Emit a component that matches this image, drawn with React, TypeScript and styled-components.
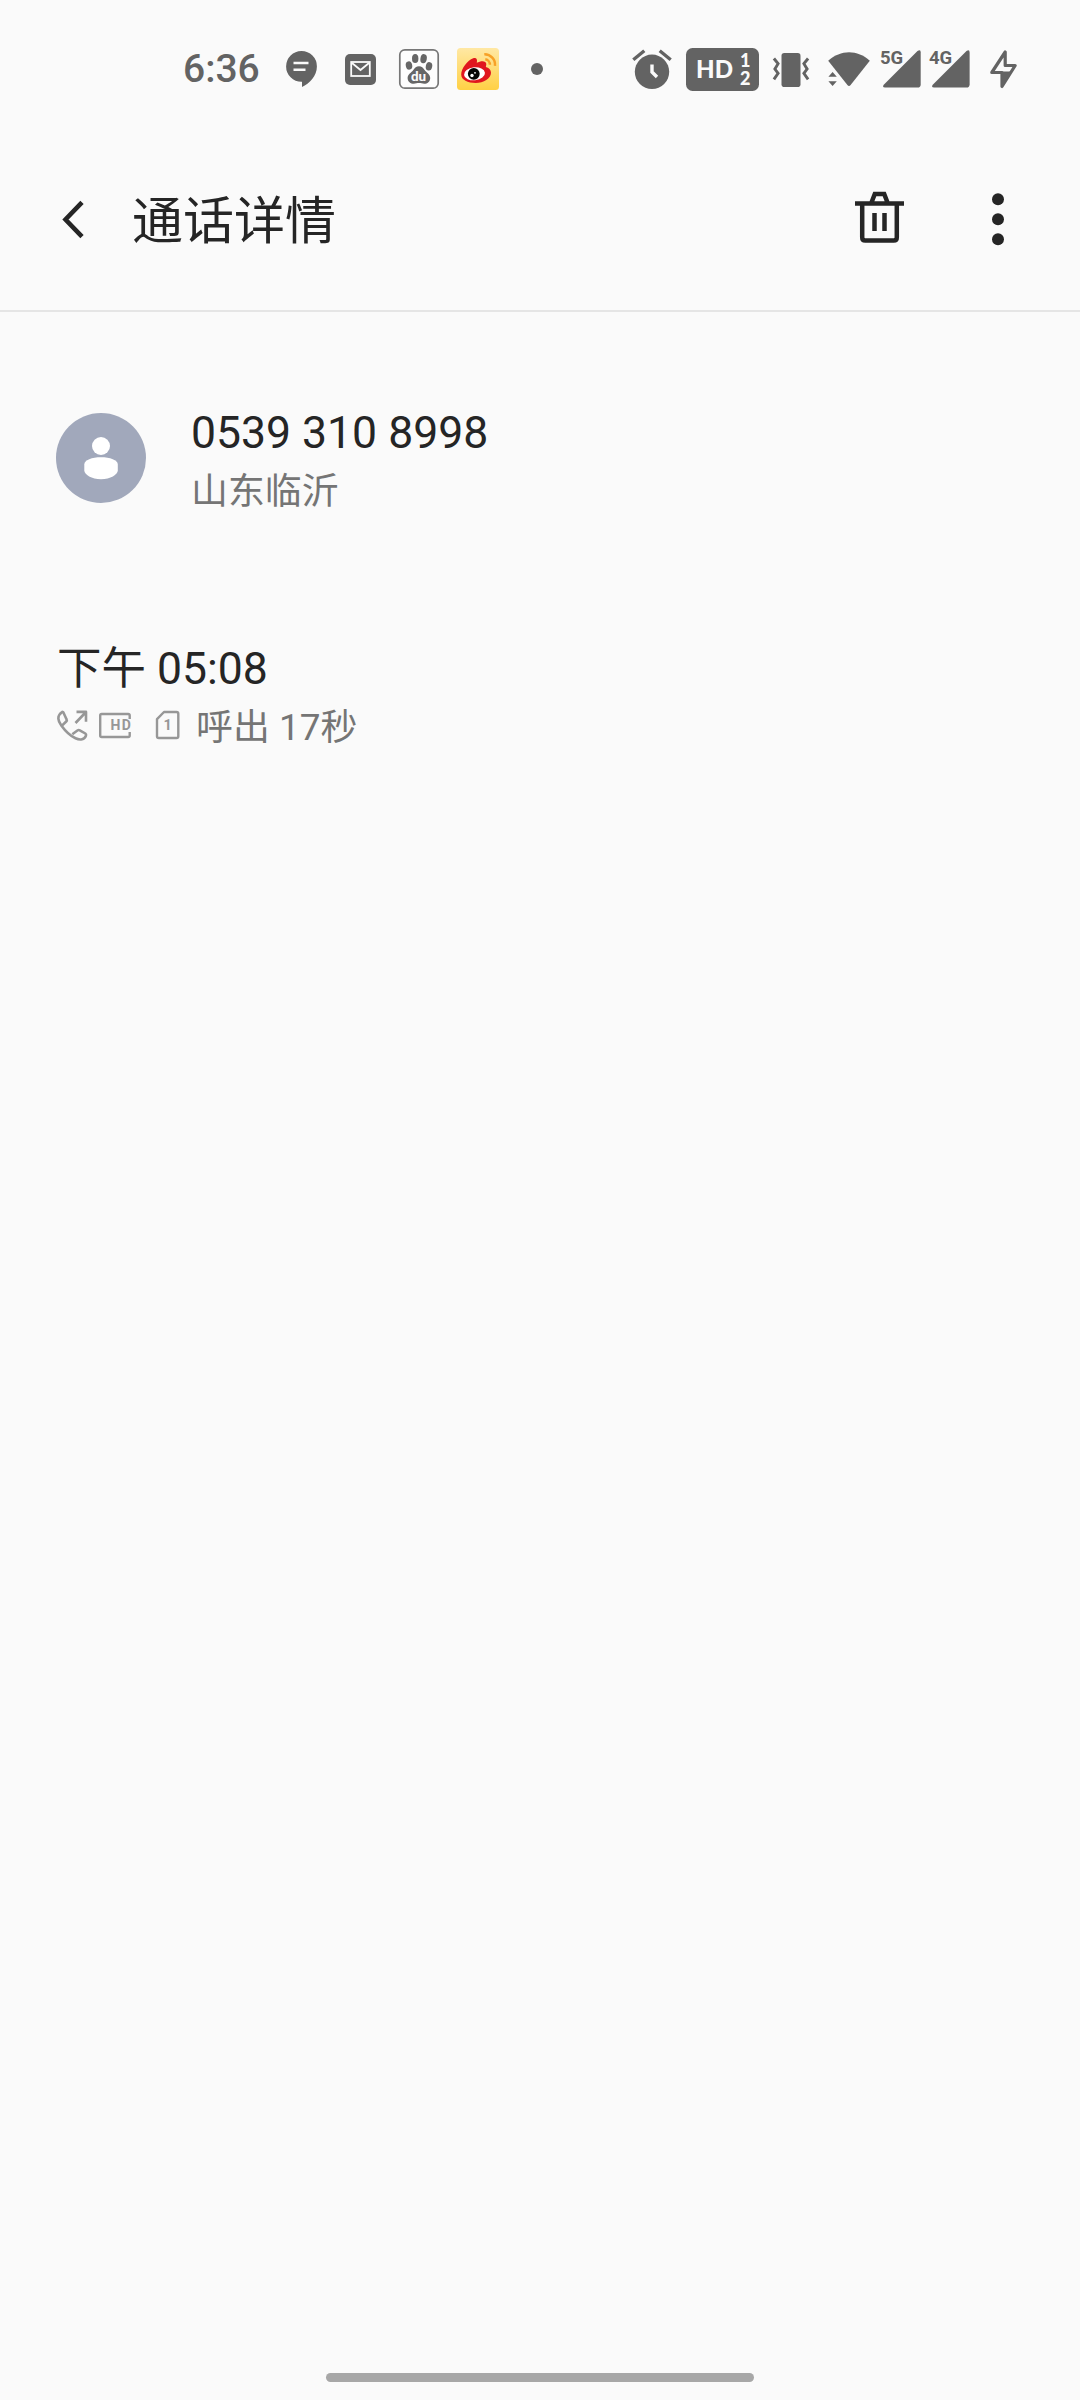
import React from 'react';
import styled, { createGlobalStyle } from 'styled-components';

const ink = '#252525';
const grey = '#636363';
const muted = '#757575';
const soft = '#979797';

const GlobalStyle = createGlobalStyle`
  body {
    margin: 0;
    background: #fafafa;
  }
`;

const Screen = styled.div`
  display: flex;
  flex-direction: column;
  box-sizing: border-box;
  width: 1080px;
  height: 2400px;
  background: #fafafa;
  color: ${ink};
  font-family: Roboto, 'Noto Sans CJK SC', sans-serif;
`;

const StatusBar = styled.header`
  display: flex;
  align-items: center;
  justify-content: space-between;
  height: 138px;
  padding: 0 63px 0 183px;
`;

const StatusGroup = styled.div`
  display: flex;
  align-items: center;
`;

const Clock = styled.time`
  width: 75px;
  color: ${grey};
  font-size: 39px;
  font-weight: 500;
  line-height: 46px;
  white-space: nowrap;
`;

const Icon = styled.svg<{ $gap?: number }>`
  display: block;
  flex: none;
  overflow: visible;
  margin-left: ${({ $gap = 0 }) => $gap}px;
`;

const TitleBar = styled.div`
  display: flex;
  align-items: center;
  box-sizing: border-box;
  height: 174px;
  padding: 0 76px 10px 62px;
  border-bottom: 2px solid #e5e5e5;
`;

const IconButton = styled.button`
  display: flex;
  padding: 0;
  border: 0;
  background: none;
  color: ${ink};
`;

const Title = styled.h1`
  flex: 1;
  margin: 0 0 0 48px;
  padding-top: 6px;
  font-size: 51px;
  font-weight: 400;
  line-height: 64px;
`;

const Actions = styled.div`
  display: flex;
  align-items: center;
  gap: 88px;
`;

const Content = styled.main`
  display: flex;
  flex: 1;
  flex-direction: column;
  padding: 91px 56px 0;
`;

const Contact = styled.section`
  display: flex;
  align-items: center;
  gap: 45px;
  height: 110px;
`;

const ContactText = styled.div`
  display: flex;
  flex-direction: column;
  padding-top: 8px;
`;

const Primary = styled.div`
  font-size: 44.5px;
  line-height: 58px;
  white-space: nowrap;
`;

const Secondary = styled.div`
  color: ${muted};
  font-size: 36.9px;
  font-weight: 400;
  line-height: 60px;
  height: 58px;
  white-space: nowrap;
`;

const Call = styled.section`
  display: flex;
  flex-direction: column;
  margin-top: 127px;
  padding-left: 1px;
`;

const CallMeta = styled.div`
  display: flex;
  align-items: center;
  height: 54px;
`;

const CallText = styled(Secondary)`
  margin-left: 16px;
  padding-top: 4px;
`;

const NavArea = styled.footer`
  display: flex;
  justify-content: center;
  align-items: flex-start;
  height: 27px;
`;

const NavPill = styled.div`
  width: 428px;
  height: 9px;
  border-radius: 5px;
  background: #a7a7a7;
`;

type IconProps = {
  box: [number, number, number, number];
  gap?: number;
  children: React.ReactNode;
};

const Glyph = ({ box, gap, children }: IconProps) => (
  <Icon $gap={gap} width={box[2]} height={box[3]} viewBox={box.join(' ')} fill="none">
    {children}
  </Icon>
);

const font = 'Roboto, sans-serif';

const Notifications = () => (
  <>
    <Glyph box={[286, 49, 31, 40]} gap={28}>
      <path d="M301.500 51a15.400 15.400 0 0 1 15.400 15.600c0 9.400-7.400 17.400-14.900 20.400v-5.200h-.5A15.400 15.400 0 0 1 301.500 51Z" fill={grey} />
      <path d="M293.500 63h15M293.500 69.800h12" stroke="#fafafa" strokeWidth="2.600" />
    </Glyph>
    <Glyph box={[345, 49, 31, 40]} gap={28}>
      <rect x="345" y="54" width="31" height="31" rx="5" fill={grey} />
      <rect x="351.200" y="62" width="18.600" height="14" stroke="#fafafa" strokeWidth="1.800" />
      <path d="M352 63l8.500 7 8.500-7" stroke="#fafafa" strokeWidth="1.800" />
    </Glyph>
    <Glyph box={[399, 49, 40, 40]} gap={23}>
      <rect x="399.800" y="49.800" width="38.400" height="38.400" rx="5" fill="#fdfdfd" stroke="#777" strokeWidth="1.700" />
      <g fill="#666">
        <ellipse cx="415.200" cy="58.500" rx="3.200" ry="4.600" />
        <ellipse cx="423.600" cy="58.700" rx="3.200" ry="4.600" transform="rotate(10 423.600 58.700)" />
        <ellipse cx="409" cy="65.500" rx="3.200" ry="4.200" transform="rotate(-12 409 65.500)" />
        <ellipse cx="429" cy="66.300" rx="3.200" ry="4.200" transform="rotate(12 429 66.300)" />
        <path d="M419 66.300c2.600 0 4.200 1.500 5.600 3.600 1.800 2.500 5.600 4.200 5.600 8 0 3.800-2.900 5.900-5.900 5.900-2 0-3.400-.7-5.300-.7s-3.300.7-5.300.7c-3 0-6.100-2.100-6.100-5.900 0-3.800 3.900-5.500 5.700-8 1.500-2.100 3.100-3.600 5.700-3.600Z" />
      </g>
      <text x="418.600" y="81" textAnchor="middle" fontFamily={font} fontSize="13.500" fontWeight="700" fill="#fafafa">du</text>
    </Glyph>
    <Glyph box={[457, 48, 42, 42]} gap={18}>
      <defs>
        <linearGradient id="weiboTile" x1="0" y1="0" x2="0" y2="1">
          <stop offset="0" stopColor="#ffe8a4" />
          <stop offset="1" stopColor="#ffd044" />
        </linearGradient>
      </defs>
      <rect x="457" y="48" width="42" height="42" rx="3.500" fill="url(#weiboTile)" />
      <path d="M461.200 74.500c0-5.500 6.300-14.500 12-16.200 3.200-1 4.400 1 3.600 4.400 3.800-1.900 9.200-2.600 9.500 1.300 0 1.300-.4 2.300-.5 3 3 .9 5.200 2.700 5.200 5.800 0 5.800-7.400 10.200-15.300 10.200s-14.500-3-14.500-8.500Z" fill="#e0161e" />
      <ellipse cx="474.500" cy="73.800" rx="10.500" ry="6.500" transform="rotate(-6 474.500 73.800)" fill="#fff" />
      <circle cx="473.800" cy="73.800" r="5.900" fill="#050505" />
      <circle cx="472" cy="75.500" r="1.700" fill="#fff" />
      <circle cx="475" cy="72.800" r=".9" fill="#fff" />
      <path d="M484.300 54.200a10.500 10.500 0 0 1 10.700 11.600M485.300 59.300a5.500 5.500 0 0 1 4.600 5.500" stroke="#f7a127" strokeWidth="2.500" />
    </Glyph>
    <Glyph box={[531, 63, 12, 12]} gap={32}>
      <circle cx="537" cy="69" r="6" fill={grey} />
    </Glyph>
  </>
);

const SystemIcons = () => (
  <>
    <Glyph box={[632, 48, 40, 42]}>
      <circle cx="652" cy="71.800" r="17.200" fill={grey} />
      <path d="M633.300 59.700l11-9M670.700 59.700l-11-9" stroke={grey} strokeWidth="3.400" />
      <path d="M652 64.500v7.500l5 5" stroke="#fafafa" strokeWidth="3.400" />
    </Glyph>
    <Glyph box={[686, 48, 73, 42]} gap={14}>
      <rect x="686" y="48" width="73" height="43" rx="6.500" fill={grey} />
      <text x="696" y="78" fontFamily="Lato, sans-serif" fontSize="25" fontWeight="900" textLength="37" lengthAdjust="spacingAndGlyphs" fill="#fafafa">HD</text>
      <text x="745.300" y="67" textAnchor="middle" fontFamily="Lato, sans-serif" fontSize="18" fontWeight="900" fill="#fafafa">1</text>
      <text x="745.200" y="85" textAnchor="middle" fontFamily="Lato, sans-serif" fontSize="18" fontWeight="900" fill="#fafafa">2</text>
    </Glyph>
    <Glyph box={[773, 48, 36, 42]} gap={14}>
      <rect x="781.500" y="53" width="19" height="34" rx="2.800" fill={grey} />
      <path d="M773.900 58.500l4.200 5.200-3.200 5.300 3.200 4.300-4.200 6M808.100 58.500l-4.200 5.200 3.200 5.300-3.200 4.300 4.200 6" stroke={grey} strokeWidth="2.900" />
    </Glyph>
    <Glyph box={[828, 48, 42, 42]} gap={19}>
      <path d="M828.200 60.800c12.500-11.400 29.300-11.400 41.600 0L850.600 85q-1.600 1.800-3.200 0Z" fill={grey} />
      <path d="M828.400 76.800l4.200-4.800 4.200 4.800ZM828.400 81.200l4.200 4.800 4.200-4.800Z" fill={grey} />
    </Glyph>
    <Glyph box={[880, 48, 41, 42]} gap={10}>
      <text x="880" y="63.700" fontFamily={font} fontSize="18.500" fontWeight="700" fill={grey}>5G</text>
      <path d="M884 84.500L917.500 51Q920.700 48.800 920.700 52.500V84.500Q920.700 87.600 917.500 87.600H885Q881.600 87.200 884 84.500Z" fill={grey} />
    </Glyph>
    <Glyph box={[929, 48, 41, 42]} gap={8}>
      <text x="929" y="63.700" fontFamily={font} fontSize="18.500" fontWeight="700" fill={grey}>4G</text>
      <path d="M933 84.500L966.500 51Q969.600 48.800 969.600 52.500V84.500Q969.600 87.600 966.500 87.600H934Q930.600 87.200 933 84.500Z" fill={grey} />
    </Glyph>
    <Glyph box={[990, 48, 27, 42]} gap={20}>
      <path d="M1005.200 52V65.500H1015.200L1002 86.500V72.500H991.800Z" stroke={grey} strokeWidth="3.200" strokeLinejoin="round" />
      <path d="M1001 71.500H1012L1002 87Z" fill={grey} />
    </Glyph>
  </>
);

const App = () => (
  <>
    <GlobalStyle />
    <Screen>
      <StatusBar>
        <StatusGroup>
          <Clock>6:36</Clock>
          <Notifications />
        </StatusGroup>
        <StatusGroup>
          <SystemIcons />
        </StatusGroup>
      </StatusBar>

      <TitleBar>
        <IconButton aria-label="返回">
          <Glyph box={[62, 199, 22, 40]}>
            <path d="M82 202.300L65.500 219.500L82 236.700" stroke="currentColor" strokeWidth="4.600" />
          </Glyph>
        </IconButton>
        <Title>通话详情</Title>
        <Actions>
          <IconButton aria-label="删除">
            <Glyph box={[855, 191, 49, 56]}>
              <path d="M855 203.500h49M862.200 203v34.500q0 3 3 3h28.600q3 0 3-3V203M871.300 203l3.500-9.100h9.400l3.500 9.100M874.500 213v18M884.500 213v18" stroke="currentColor" strokeWidth="4.500" />
            </Glyph>
          </IconButton>
          <IconButton aria-label="更多">
            <Glyph box={[992, 191, 12, 56]}>
              <g fill="currentColor">
                <circle cx="998" cy="199.200" r="6" />
                <circle cx="998" cy="219.200" r="6" />
                <circle cx="998" cy="239.200" r="6" />
              </g>
            </Glyph>
          </IconButton>
        </Actions>
      </TitleBar>

      <Content>
        <Contact>
          <Glyph box={[56, 413, 90, 90]}>
            <circle cx="101" cy="458" r="45" fill="#a1a8bb" />
            <circle cx="101" cy="446" r="9" fill="#fff" />
            <path d="M84.300 464.500C84.300 460 92 457.300 101 457.300s16.800 2.700 16.800 7.200v6c0 4-7.500 8.800-16.800 8.800s-16.700-4.800-16.700-8.800Z" fill="#fff" />
          </Glyph>
          <ContactText>
            <Primary>0539 310 8998</Primary>
            <Secondary>山东临沂</Secondary>
          </ContactText>
        </Contact>

        <Call>
          <Primary>下午 05:08</Primary>
          <CallMeta>
            <Glyph box={[57, 710, 31, 31]}>
              <g stroke={soft} strokeWidth="2.600" strokeLinejoin="round">
                <path d="M61.800 712.200C56.600 716 58 721 61.300 725.500C66 732 70 735.800 75.500 738.300C80.500 740.500 84.500 739.500 86 735.500Q86.400 734.300 85.300 733.500L79.800 730.300Q78.600 729.700 77.400 730.500L72.300 734.200M62.500 725.200L66.200 721.500Q67.200 720.500 66.500 719.200L63.400 712.500Q62.700 711.500 61.800 712.200" />
                <path d="M75.500 723L86 712M76.500 711.900H86V721.800" />
              </g>
            </Glyph>
            <Glyph box={[99, 712, 32, 27]} gap={11}>
              <path d="M129.700 719V715.500Q129.700 714 128.200 714H101.700Q100.200 714 100.200 715.500V735.500Q100.200 737 101.700 737H128.200Q129.700 737 129.700 735.500V732" stroke={soft} strokeWidth="2.400" />
              <text x="110.500" y="730.300" fontFamily={font} fontSize="14" fontWeight="700" textLength="20.300" lengthAdjust="spacing" fill={soft}>HD</text>
            </Glyph>
            <Glyph box={[156, 710, 24, 30]} gap={25}>
              <path d="M164 712H176.500Q178.300 712 178.300 713.800V736.200Q178.300 738 176.500 738H158.800Q157 738 157 736.200V719.200Z" stroke={soft} strokeWidth="2.400" strokeLinejoin="round" />
              <text x="167.700" y="730.200" textAnchor="middle" fontFamily={font} fontSize="14.500" fontWeight="700" fill={soft}>1</text>
            </Glyph>
            <CallText>呼出 17秒</CallText>
          </CallMeta>
        </Call>
      </Content>

      <NavArea>
        <NavPill />
      </NavArea>
    </Screen>
  </>
);

export default App;
